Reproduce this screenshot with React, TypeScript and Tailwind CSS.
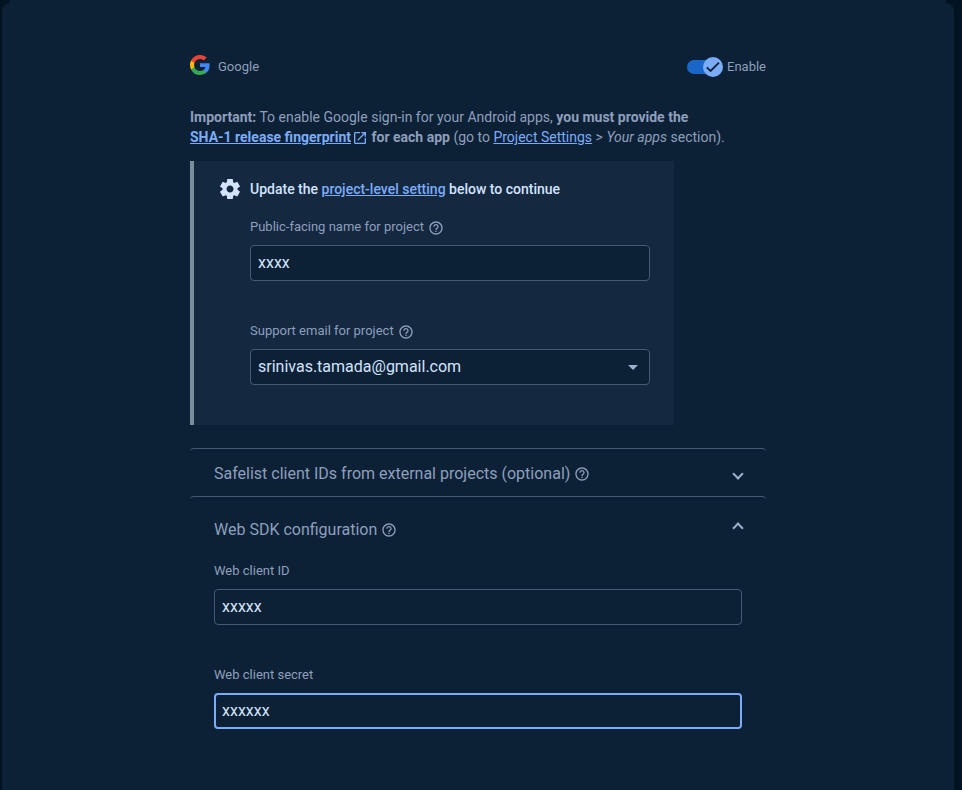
import type { ReactNode } from 'react';
import { MdArrowDropDown, MdHelpOutline, MdOpenInNew } from 'react-icons/md';

function GoogleLogo() {
  return (
    <svg className="h-5 w-5" viewBox="0 0 18 18">
      <path fill="#4285F4" d="M17.64 9.2c0-.64-.06-1.25-.16-1.84H9v3.48h4.84a4.14 4.14 0 0 1-1.8 2.72v2.26h2.92c1.7-1.57 2.68-3.88 2.68-6.62z" />
      <path fill="#34A853" d="M9 18c2.43 0 4.47-.8 5.96-2.18l-2.92-2.26c-.8.54-1.84.86-3.04.86-2.34 0-4.33-1.58-5.04-3.71H.96v2.33A9 9 0 0 0 9 18z" />
      <path fill="#FBBC05" d="M3.96 10.71A5.4 5.4 0 0 1 3.68 9c0-.6.1-1.17.28-1.71V4.96H.96A9 9 0 0 0 0 9c0 1.45.35 2.83.96 4.04l3-2.33z" />
      <path fill="#EA4335" d="M9 3.58c1.32 0 2.51.45 3.44 1.35l2.58-2.59C13.46.89 11.43 0 9 0A9 9 0 0 0 .96 4.96l3 2.33C4.67 5.16 6.66 3.58 9 3.58z" />
    </svg>
  );
}

function Gear() {
  return (
    <svg className="mr-2 h-6 w-6" viewBox="0 -960 960 960" fill="currentColor">
      <path d="m370-80-16-128q-13-5-24.5-12T307-235l-119 50L78-375l103-78q-1-7-1-13.5v-27q0-6.5 1-13.5L78-585l110-190 119 50q11-8 23-15t24-12l16-128h220l16 128q13 5 24.5 12t22.5 15l119-50 110 190-103 78q1 7 1 13.5v27q0 6.5-2 13.5l103 78-110 190-118-50q-11 8-23 15t-24 12L590-80H370Zm112-260q58 0 99-41t41-99q0-58-41-99t-99-41q-59 0-99.5 41T342-480q0 58 40.5 99t99.5 41Z" />
    </svg>
  );
}

function Help() {
  return <MdHelpOutline className="h-4 w-4 shrink-0" />;
}

function Toggle() {
  return (
    <div className="relative h-5 w-9">
      <div className="absolute top-[3px] left-0 h-3.5 w-8 rounded-full bg-[#1b66c9]" />
      <div className="absolute top-0 left-4 flex h-5 w-5 items-center justify-center rounded-full bg-[#7cacf8]">
        <svg className="h-4 w-4" viewBox="0 0 16 16" fill="none" stroke="#0c2136" strokeWidth="1.8">
          <path d="M1.8 8.3 5.6 12 14 3.7" />
        </svg>
      </div>
    </div>
  );
}

function Field({ label, help, children }: { label: string; help?: boolean; children: ReactNode }) {
  return (
    <div>
      <div className="flex h-5 items-start text-[13px] leading-5">
        <span>{label}</span>
        {help && <span className="mt-[3px] ml-1"><Help /></span>}
      </div>
      {children}
    </div>
  );
}

function Link({ children }: { children: ReactNode }) {
  return <a href="#" className="text-[#7cacf8] underline">{children}</a>;
}

const box = 'flex h-9 w-full items-center rounded-[4px] bg-[#0c2136] text-base text-[#d3e3fd]';

export default function App() {
  return (
    <div className="flex h-[790px] w-[962px] flex-col overflow-hidden bg-[#021321] pl-[2px] font-['Roboto',sans-serif] text-[#8e9fbc]">
      <div className="ml-2 h-[3px] w-[936px] shrink-0 bg-[#0c2136]" />
      <div className="w-[952px] grow rounded-t-lg bg-[#0c2136] pt-[52px] pl-[188px]">
        <div className="w-[576px]">
          <div className="flex h-[23px] justify-between text-[13px] leading-[23px]">
            <div className="flex">
              <GoogleLogo />
              <span className="ml-2">Google</span>
            </div>
            <div className="flex">
              <div className="mt-[2px]"><Toggle /></div>
              <span className="ml-1">Enable</span>
            </div>
          </div>

          <p className="mt-[29px] h-10 text-sm leading-5 whitespace-nowrap">
            <b>Important:</b> To enable Google sign-in for your Android apps, <b>you must provide the</b>
            <br />
            <b><Link>SHA-1 release fingerprint</Link></b>
            <MdOpenInNew className="ml-px inline h-4 w-4 align-[-4px] text-[#7cacf8]" />
            <b> for each app</b> (go to <Link>Project Settings</Link> &gt; <i>Your apps</i> section).
          </p>

          <section className="mt-[14px] h-[264px] w-[484px] border-l-4 border-[#78909c] bg-[#142840] pt-4 pl-6">
            <div className="flex h-6 items-center text-sm font-medium text-[#d3e3fd]">
              <Gear />
              <span>Update the <Link>project-level setting</Link> below to continue</span>
            </div>
            <div className="mt-4 ml-8 w-[400px]">
              <Field label="Public-facing name for project" help>
                <div className={`${box} mt-2 border border-[#465a73] px-[7px]`}>xxxx</div>
              </Field>
              <div className="mt-10">
                <Field label="Support email for project" help>
                  <div className={`${box} mt-2 justify-between border border-[#465a73] pr-1 pl-[7px]`}>
                    <span>srinivas.tamada@gmail.com</span>
                    <MdArrowDropDown className="h-6 w-6 text-[#9bb0cc]" />
                  </div>
                </Field>
              </div>
            </div>
          </section>

          <section className="mt-[23px] flex h-12 justify-between rounded-t border-t border-[#465a73] px-6 text-base leading-[50px]">
            <div className="flex">
              <span>Safelist client IDs from external projects (optional)</span>
              <span className="mt-[17px] ml-1"><Help /></span>
            </div>
            <span className="mt-[21px] h-2 w-2 rotate-45 border-r-2 border-b-2 border-[#9bb0cc]" />
          </section>

          <section className="rounded-t border-t border-[#465a73] px-6">
            <div className="flex h-[64px] justify-between text-base leading-[66px]">
              <div className="flex">
                <span>Web SDK configuration</span>
                <span className="mt-[25px] ml-1"><Help /></span>
              </div>
              <span className="mt-[27px] h-2 w-2 -rotate-[135deg] border-r-2 border-b-2 border-[#9bb0cc]" />
            </div>
            <Field label="Web client ID">
              <div className={`${box} mt-2 border border-[#465a73] px-[7px]`}>xxxxx</div>
            </Field>
            <div className="mt-10">
              <Field label="Web client secret">
                <div className={`${box} mt-2 border-2 border-[#7cacf8] px-[6px]`}>xxxxxx</div>
              </Field>
            </div>
          </section>
        </div>
      </div>
    </div>
  );
}
